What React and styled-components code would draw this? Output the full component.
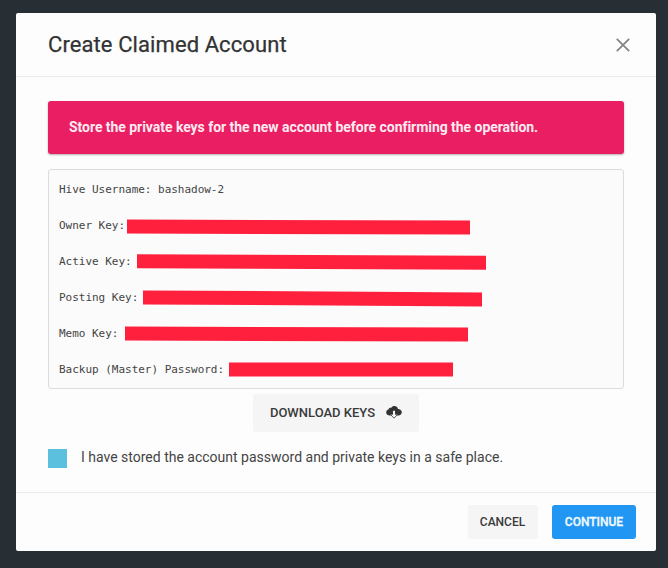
import React from "react";
import styled, { createGlobalStyle } from "styled-components";

const GlobalStyle = createGlobalStyle`
  * { box-sizing: border-box; }
  body { margin: 0; background: #272e34; font-family: Roboto, "Liberation Sans", sans-serif; color: #333; }
`;

const Backdrop = styled.main`
  width: 668px;
  height: 568px;
  padding: 13px 12px 17px 16px;
  background: #272e34;
  overflow: hidden;
`;

const Dialog = styled.section`
  width: 640px;
  height: 538px;
  display: flex;
  flex-direction: column;
  background: #fdfdfd;
  border-radius: 2px;
`;

const Header = styled.header`
  height: 64px;
  flex: none;
  display: flex;
  align-items: center;
  justify-content: space-between;
  padding: 0 26px 0 32px;
  border-bottom: 1px solid #ebebeb;
`;

const Title = styled.h1`
  margin: 0;
  font-size: 22px;
  font-weight: 400;
  line-height: 30px;
  letter-spacing: 0.09px;
  -webkit-text-stroke: 0.25px #333;
  white-space: nowrap;
`;

const CloseButton = styled.button`
  width: 14px;
  height: 14px;
  padding: 0;
  border: 0;
  background: none;
  svg { display: block; }
`;

const Body = styled.div`
  flex: 1;
  display: flex;
  flex-direction: column;
  padding: 24px 32px 0;
`;

const Alert = styled.div`
  height: 53px;
  padding: 0 21px 2px;
  display: flex;
  align-items: center;
  border-radius: 3px;
  background: #e91e63;
  color: #ffeaf1;
  font-size: 14px;
  font-weight: 700;
  letter-spacing: -0.045px;
  white-space: nowrap;
  box-shadow: 0 1px 2px rgba(0, 0, 0, 0.3);
`;

const KeyBox = styled.div`
  height: 220px;
  margin-top: 15px;
  padding: 2px 10px 0;
  border: 1px solid #dcdcdc;
  border-radius: 3px;
  background: #fbfbfb;
`;

const KeyRow = styled.div`
  height: 36px;
  display: flex;
  align-items: center;
  font: 11px/18px "DejaVu Sans Mono", "Liberation Mono", monospace;
  letter-spacing: -0.02px;
  color: #444;
  white-space: pre;
`;

const Redaction = styled.span`
  flex: none;
  width: ${(p) => p.$width}px;
  height: 14.2px;
  margin-left: ${(p) => p.$gap}px;
  background: #ff203e;
  transform: translateY(${(p) => p.$shift}px) skewY(${(p) => p.$tilt}deg);
  transform-origin: left center;
`;

const KeyLabel = styled.span`
  flex: none;
  width: ${(p) => p.$chars * 6.6}px;
`;

const Button = styled.button`
  width: ${(p) => p.$width}px;
  height: ${(p) => p.$height || 34}px;
  display: flex;
  align-items: center;
  justify-content: center;
  gap: 11px;
  padding: 0 0 ${(p) => p.$lift || 0}px;
  border: 0;
  border-radius: 3px;
  background: ${(p) => (p.$primary ? "#2196f3" : "#f5f5f5")};
  color: ${(p) => (p.$primary ? "#f2faff" : "#3a3a3a")};
  font: 500 ${(p) => p.$size || 12}px Roboto, sans-serif;
  -webkit-text-stroke: ${(p) => (p.$primary ? "0.3px #f2faff" : "0")};
  white-space: nowrap;
`;

const DownloadRow = styled.div`
  display: flex;
  justify-content: center;
  margin-top: 5px;
`;

const Confirm = styled.label`
  display: flex;
  align-items: center;
  height: 19px;
  margin-top: 17px;
  font-size: 14px;
  color: #444;
  white-space: nowrap;
`;

const ConfirmText = styled.span`
  padding-bottom: 3px;
`;

const Check = styled.span`
  width: 19px;
  height: 19px;
  margin-right: 14px;
  background: #5bc0de;
`;

const Footer = styled.footer`
  height: 59px;
  flex: none;
  display: flex;
  justify-content: flex-end;
  gap: 14.5px;
  padding: 12px 20px 0;
  border-top: 1px solid #ebebeb;
`;

const keys = [
  { label: "Owner Key:", gap: 2, width: 343, shift: 0.6, tilt: 0.15 },
  { label: "Active Key:", gap: 5.4, width: 349, shift: -0.7, tilt: 0.22 },
  { label: "Posting Key:", gap: 4.8, width: 339, shift: -0.6, tilt: 0.35 },
  { label: "Memo Key:", gap: 6.6, width: 343, shift: -0.4, tilt: 0.13 },
  { label: "Backup (Master) Password:", gap: 5, width: 224, shift: -0.6, tilt: 0.03 },
];

const CloudDownload = () => (
  <svg width="16" height="13" viewBox="0 0 16 13">
    <path
      d="M4 9.500C1.800 9.500.2 8.300.2 6.500C.2 5 1.200 3.900 2.500 3.600C2.600 1.900 4.300 1.300 5.300 1.800C6 .7 7 .1 8.300.1C10.300.1 11.700 1.400 12 3C14.200 3 15.800 4.400 15.800 6.300C15.800 8.200 14.400 9.500 12.300 9.500Z"
      fill="#333"
    />
    <path d="M6.900 5h2.200v3.200h2.700L8 12.200 4.200 8.200h2.700Z" fill="#f5f5f5" stroke="#333" strokeWidth=".8" />
    <path d="M7 4.800h2v3.900H7Z" fill="#f5f5f5" />
  </svg>
);

export default function App() {
  return (
    <>
      <GlobalStyle />
      <Backdrop>
        <Dialog role="dialog" aria-label="Create Claimed Account">
          <Header>
            <Title>Create Claimed Account</Title>
            <CloseButton aria-label="Close">
              <svg width="14" height="14" viewBox="0 0 14 14">
                <path d="M.8.8l12.400 12.400M13.200.8L.8 13.200" stroke="#858585" strokeWidth="1.800" />
              </svg>
            </CloseButton>
          </Header>
          <Body>
            <Alert>Store the private keys for the new account before confirming the operation.</Alert>
            <KeyBox>
              <KeyRow>Hive Username: bashadow-2</KeyRow>
              {keys.map((k) => (
                <KeyRow key={k.label}>
                  <KeyLabel $chars={k.label.length}>{k.label}</KeyLabel>
                  <Redaction $gap={k.gap} $width={k.width} $shift={k.shift} $tilt={k.tilt} />
                </KeyRow>
              ))}
            </KeyBox>
            <DownloadRow>
              <Button $width={166} $height={38} $size={13} $lift={1}>
                DOWNLOAD KEYS
                <CloudDownload />
              </Button>
            </DownloadRow>
            <Confirm>
              <Check />
              <ConfirmText>I have stored the account password and private keys in a safe place.</ConfirmText>
            </Confirm>
          </Body>
          <Footer>
            <Button $width={70}>CANCEL</Button>
            <Button $width={84} $primary>CONTINUE</Button>
          </Footer>
        </Dialog>
      </Backdrop>
    </>
  );
}
